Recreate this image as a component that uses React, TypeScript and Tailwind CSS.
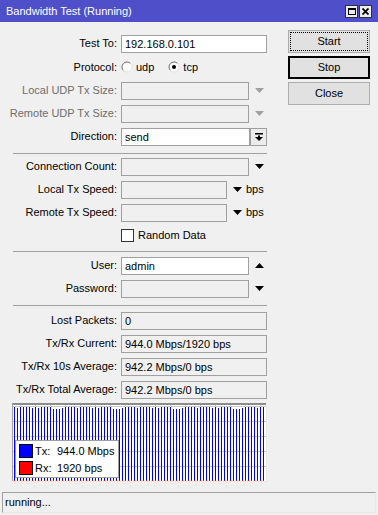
import React from 'react';

const DownArrow = ({ disabled = false }: { disabled?: boolean }) => (
  <svg width="9" height="5" viewBox="0 0 9 5" className="shrink-0">
    <polygon points="0,0 9,0 4.5,5" fill={disabled ? '#a0a0a0' : '#000'} />
  </svg>
);

const UpArrow = () => (
  <svg width="9" height="5" viewBox="0 0 9 5" className="shrink-0">
    <polygon points="0,5 9,5 4.5,0" fill="#000" />
  </svg>
);

const Radio = ({ checked }: { checked?: boolean }) => (
  <svg width="12" height="12" viewBox="0 0 12 12" className="shrink-0">
    <circle cx="6" cy="6" r="5" fill="#fff" />
    <path d="M2.46 9.54 A5 5 0 0 1 9.54 2.46" fill="none" stroke="#6b6b6b" strokeWidth="1" />
    <path d="M9.54 2.46 A5 5 0 0 1 2.46 9.54" fill="none" stroke="#e3e3e3" strokeWidth="1" />
    {checked && <circle cx="6" cy="6" r="2" fill="#000" />}
  </svg>
);

interface RowProps {
  label: string;
  disabled?: boolean;
  tall?: boolean;
  children?: React.ReactNode;
}

const Row: React.FC<RowProps> = ({ label, disabled, tall, children }) => (
  <div className={tall ? 'flex items-center h-[24px]' : 'flex items-center h-[23px]'}>
    <div className={disabled ? 'w-[117px] text-right text-[#6d6d6d] whitespace-nowrap' : 'w-[117px] text-right whitespace-nowrap'}>
      {label}
    </div>
    <div className="ml-[4px] flex items-center">{children}</div>
  </div>
);

const Field = ({ w, value, white }: { w: string; value?: string; white?: boolean }) => (
  <div
    className={`${w} h-[18px] border border-[#a0a0a0] px-[3px] leading-[16px] whitespace-nowrap ${white ? 'bg-white' : 'bg-[#f0f0f0]'}`}
  >
    {value}
  </div>
);

// bar tops vary a little, like the live graph
const tops = [4, 4, 5, 4, 4, 6, 4, 5, 4, 4, 4, 6, 5, 4, 4, 4, 5, 4, 6, 4];
const bars = Array.from({ length: 84 }, (_, i) => ({ x: 2 + i * 3, top: tops[(i * 7) % tops.length] }));

const Graph = () => (
  <div className="relative ml-[12px] mt-[2px] w-[255px] h-[79px]">
    <svg width="255" height="79" viewBox="0 0 255 79" shapeRendering="crispEdges">
      <rect x="0" y="0" width="255" height="79" fill="#fff" />
      {Array.from({ length: 17 }, (_, k) => (
        <rect key={'v' + k} x={8 + k * 15} y="2" width="1" height="77" fill="#c8c8c8" />
      ))}
      {[3, 18, 33, 48, 63].map((y) => (
        <rect key={'h' + y} x="1" y={y} width="254" height="1" fill="#c8c8c8" />
      ))}
      {bars.map((b, i) => (
        <g key={i}>
          <rect x={b.x} y={b.top} width="1" height={78 - b.top} fill="#0000ff" />
          <rect x={b.x} y="77" width="1" height="1" fill="#ff0000" />
        </g>
      ))}
      <rect x="0" y="0" width="255" height="2" fill="#8c8c8c" />
      <rect x="0" y="0" width="1" height="79" fill="#a0a0a0" />
      <rect x="254" y="0" width="1" height="79" fill="#e8e8e8" />
      <rect x="0" y="78" width="255" height="1" fill="#e8e8e8" />
    </svg>
    <div className="absolute left-[3px] top-[37px] w-[104px] h-[38px] bg-white border border-[#a0a0a0] px-[3px] pt-[3px] flex flex-col gap-[3px]">
      <div className="flex items-center h-[14px]">
        <div className="w-[14px] h-[14px] bg-[#0000ff] border border-black" />
        <span className="ml-[2px] w-[22px]">Tx:</span>
        <span>944.0 Mbps</span>
      </div>
      <div className="flex items-center h-[14px]">
        <div className="w-[14px] h-[14px] bg-[#ff0000] border border-black" />
        <span className="ml-[2px] w-[22px]">Rx:</span>
        <span>1920 bps</span>
      </div>
    </div>
  </div>
);

export default function App() {
  return (
    <div className="w-[378px] h-[515px] bg-[#f0f0f0] flex flex-col overflow-hidden text-[11px] text-black font-['Liberation_Sans',Arial,sans-serif]">
      {/* title bar */}
      <div className="h-[22px] bg-[#4f4fc9] flex items-center pl-[6px] pr-[6px] shrink-0">
        <span className="text-white text-[11px]">Bandwidth Test (Running)</span>
        <div className="ml-auto flex gap-[1px]">
          <div className="w-[13px] h-[13px] bg-[#ececec] border border-[#303030] flex items-center justify-center">
            <div className="w-[8px] h-[7px] border border-black border-t-2" />
          </div>
          <div className="w-[13px] h-[13px] bg-[#ececec] border border-[#303030] flex items-center justify-center">
            <svg width="7" height="7" viewBox="0 0 7 7">
              <path d="M0.5 0.5 L6.5 6.5 M6.5 0.5 L0.5 6.5" stroke="#000" strokeWidth="1.8" />
            </svg>
          </div>
        </div>
      </div>

      <div className="flex">
        <div className="w-[270px] pt-[10px]">
          <Row label="Test To:">
            <Field w="w-[146px]" value="192.168.0.101" white />
          </Row>
          <Row label="Protocol:" tall>
            <div className="flex items-center">
              <Radio />
              <span className="ml-[3px]">udp</span>
              <div className="ml-[14px]">
                <Radio checked />
              </div>
              <span className="ml-[3px]">tcp</span>
            </div>
          </Row>
          <Row label="Local UDP Tx Size:" disabled>
            <Field w="w-[128px]" />
            <div className="ml-[6px]">
              <DownArrow disabled />
            </div>
          </Row>
          <Row label="Remote UDP Tx Size:" disabled>
            <Field w="w-[128px]" />
            <div className="ml-[6px]">
              <DownArrow disabled />
            </div>
          </Row>
          <Row label="Direction:">
            <Field w="w-[129px]" value="send" white />
            <div className="w-[17px] h-[18px] border border-[#a0a0a0] bg-[#ececec] flex items-center justify-center">
              <svg width="8" height="8" viewBox="0 0 8 8">
                <rect x="0" y="0" width="8" height="1.5" fill="#000" />
                <rect x="3" y="2.5" width="2" height="2" fill="#000" />
                <polygon points="0,4 8,4 4,8" fill="#000" />
              </svg>
            </div>
          </Row>

          <div className="h-[7px] pt-[5px]">
            <div className="ml-[13px] w-[254px] border-t border-[#a0a0a0]" />
          </div>

          <Row label="Connection Count:">
            <Field w="w-[128px]" />
            <div className="ml-[6px]">
              <DownArrow />
            </div>
          </Row>
          <Row label="Local Tx Speed:">
            <Field w="w-[106px]" />
            <div className="ml-[6px]">
              <DownArrow />
            </div>
            <span className="ml-[4px]">bps</span>
          </Row>
          <Row label="Remote Tx Speed:">
            <Field w="w-[106px]" />
            <div className="ml-[6px]">
              <DownArrow />
            </div>
            <span className="ml-[4px]">bps</span>
          </Row>
          <div className="flex items-center h-[23px] pl-[121px]">
            <div className="w-[13px] h-[13px] bg-white border border-[#333]" />
            <span className="ml-[4px]">Random Data</span>
          </div>

          <div className="h-[7px] pt-[4px]">
            <div className="ml-[13px] w-[254px] border-t border-[#a0a0a0]" />
          </div>

          <Row label="User:">
            <Field w="w-[128px]" value="admin" white />
            <div className="ml-[6px]">
              <UpArrow />
            </div>
          </Row>
          <Row label="Password:">
            <Field w="w-[128px]" />
            <div className="ml-[6px]">
              <DownArrow />
            </div>
          </Row>

          <div className="h-[9px] pt-[5px]">
            <div className="ml-[13px] w-[254px] border-t border-[#a0a0a0]" />
          </div>

          <Row label="Lost Packets:">
            <Field w="w-[146px]" value="0" />
          </Row>
          <Row label="Tx/Rx Current:">
            <Field w="w-[146px]" value="944.0 Mbps/1920 bps" />
          </Row>
          <Row label="Tx/Rx 10s Average:">
            <Field w="w-[146px]" value="942.2 Mbps/0 bps" />
          </Row>
          <Row label="Tx/Rx Total Average:">
            <Field w="w-[146px]" value="942.2 Mbps/0 bps" />
          </Row>

          <Graph />
        </div>

        <div className="ml-[18px] pt-[8px] w-[82px] flex flex-col gap-[3px]">
          <button className="h-[23px] bg-[#e1e1e1] border border-[#adadad] p-[1px]">
            <div className="h-full border border-dotted border-black flex items-center justify-center">Start</div>
          </button>
          <button className="h-[23px] bg-[#e1e1e1] border-2 border-black flex items-center justify-center">Stop</button>
          <button className="h-[23px] bg-[#e1e1e1] border border-[#adadad] flex items-center justify-center">Close</button>
        </div>
      </div>

      <div className="mt-auto mx-[2px] mb-[2px] h-[21px] border border-[#a0a0a0] border-b-[#e8e8e8] border-r-[#e8e8e8] flex items-center pl-[2px]">
        running...
      </div>
    </div>
  );
}
